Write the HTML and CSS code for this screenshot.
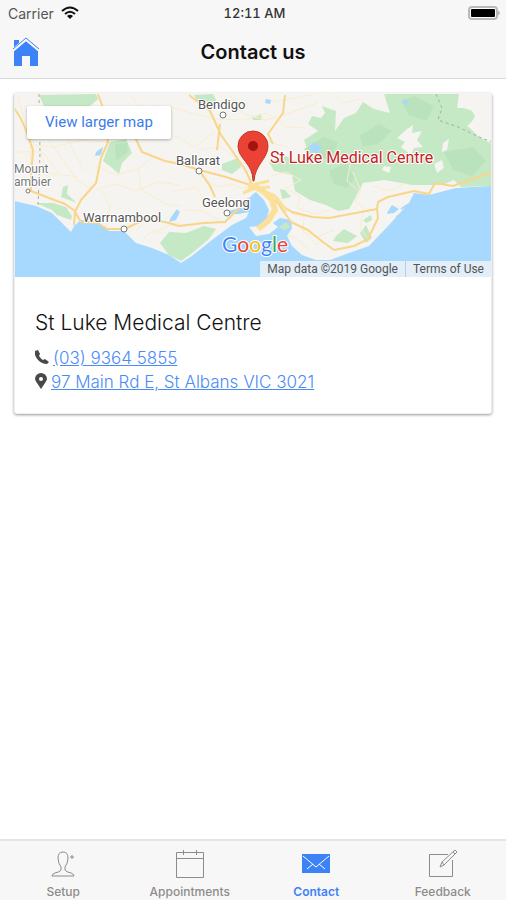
FILE: index.html
```html
<!DOCTYPE html>
<html lang="en">
<head>
  <meta charset="UTF-8">
  <meta name="viewport" content="width=device-width, initial-scale=1.0">
  <title>Contact us</title>
  <link rel="stylesheet" href="styles.css">
</head>
<body>
  <header class="header">
    <div class="status">
      <span class="carrier">Carrier
        <svg width="18" height="14" viewBox="0 0 18 14" fill="none" stroke="#111" stroke-width="2">
          <path d="M1 5Q9-2 17 5M4 8Q9 3.500 14 8"/>
          <path d="M9 13L6 10Q9 7.500 12 10Z" fill="#111" stroke="none"/>
        </svg>
      </span>
      <span class="time">12:11 AM</span>
      <svg class="battery" width="34" height="16" viewBox="0 0 34 16">
        <rect x="2" y="2" width="28" height="12" rx="3" fill="#fff" stroke="#b9b9b9" stroke-width="2"/>
        <rect x="4" y="4" width="24" height="8" rx="1" fill="#000"/>
        <path d="M31 5.500q4 2.500 0 5z" fill="#b9b9b9"/>
      </svg>
    </div>
    <div class="navbar">
      <a class="home" href="#" aria-label="Home">
        <svg width="28" height="30" viewBox="0 0 28 30" fill="#3e82f7">
          <path d="M2 3h5v4L2 11z"/>
          <path d="M14 4L26 14V29H18V19H10V29H2V14z"/>
          <path d="M1 13L14 2L27 13" fill="none" stroke="#f7f7f7" stroke-width="3"/>
          <path d="M1 12L14 1L27 12" fill="none" stroke="#3e82f7" stroke-width="1"/>
        </svg>
      </a>
      <h1 class="title">Contact us</h1>
    </div>
  </header>

  <main class="content">
    <div class="card">
      <div class="map">
        <svg class="map-picture" viewBox="0 0 478 184" preserveAspectRatio="xMidYMid slice">
          <rect width="478" height="184" fill="#f6f4f0"/>

          <!-- parks and forest -->
          <g fill="#c5e8c5">
            <path d="M25 2L82 1L84 6L76 13H30z"/>
            <path d="M96 49L112 46L118 60L108 70L105 81L97 74L89 68z"/>
            <path d="M49 94L54 92L53 101L63 110L47 104z"/>
            <path d="M22 110L39 110L52 114L58 123L57 127L43 122L38 117z"/>
            <path d="M146 150L155 139L172 140L190 133L202 136L194 147L178 160L167 168L155 162z"/>
            <path d="M180 2L199 1L203 9L185 12z"/>
            <path d="M208 71L224 65L227 74L218 81L208 77z"/>
            <path d="M238 24L247 21L248 27H239z"/>
            <path d="M255 69L272 63L285 70L296 63L290 47L304 38L294 31L298 23L307 25L311 20L308 13L322 18L321 38L330 25L342 20L349 9L360 16L376 20L370 1H445L443 15L456 15L461 23L455 34L464 43L478 51V93L447 94L440 87L428 92H398L371 87L349 90L343 102L335 116L324 118L312 112L296 107L281 98L278 82L260 78z"/>
            <path d="M266 96L271 97L277 104L268 106z"/>
            <path d="M322 143L330 136L343 143L334 150L319 148z"/>
            <path d="M349 127L357 122L358 127L352 130z"/>
            <path d="M346 140L352 132L358 145L352 150z"/>
          </g>
          <g fill="#bae2bd">
            <path d="M290 56L310 44L324 50L317 64L300 68z"/>
            <path d="M345 43L365 31L378 38L364 51L349 53z"/>
            <path d="M387 8L400 3L420 13L412 28L394 21z"/>
            <path d="M315 78L333 70L340 85L333 95L320 91z"/>
            <path d="M430 59L459 54L472 68L458 83L439 77z"/>
            <path d="M101 51L114 50L113 60L102 68z"/>
          </g>
          <g fill="#f6f4f0">
            <path d="M383 45L393 36L399 32L398 40L408 38L403 47L409 54L400 55L397 62L387 54L391 49z"/>
            <path d="M429 50L435 46L433 57L428 59zM420 71L428 67L430 75L423 80zM370 73L377 74L375 80L368 77z"/>
            <path d="M446 0H478V47L464 41L453 33L462 25L459 18L446 14z"/>
            <path d="M348 0H368L371 19L362 12L355 6L339 8L331 19L323 11L316 17V0z"/>
            <path d="M343 101L355 95L376 92L398 92L410 96L398 102L375 108L362 116L340 117z"/>
          </g>

          <!-- minor roads -->
          <g fill="none" stroke="#f8edcd" stroke-width="1">
            <path d="M4 3L10 25L20 52L40 54L68 47L96 49M30 20L36 48L50 69L62 86L78 96M50 17Q46 34 57 53T69 78M80 72L102 82L124 76L138 64L166 72M103 20L112 36L132 39L151 45M124 76L127 96L151 111L166 113M81 97L101 91L122 98L144 89L166 92M92 135L96 113L88 97M27 60L33 80L64 84M17 44L16 74L37 85"/>
            <path d="M155 13L176 20L201 26L230 27L253 20L273 34L292 35M201 39L180 54L164 44L145 40M185 57L207 54L229 70L252 75M187 83L203 94L219 91L234 97M160 98L183 94L191 111L211 118M207 128L189 118L169 117M216 2L229 21L252 27L276 20L303 10M257 9L281 5L300 1M241 97L231 77L240 60L256 49L273 54"/>
            <path d="M258 83L272 79L287 87L272 95L286 104L283 115L301 121L316 117M277 120L290 124L289 139L303 144L320 137M339 79L347 98L341 108L350 115L346 134L356 149M359 93L375 98L392 90M338 62L333 88L347 100"/>
            <path d="M130 145L139 137L150 141M174 132L158 130L139 141M122 138L133 127L148 129"/>
            <path d="M84 43L96 29L117 23L140 12M0 59L28 59L45 80M0 88L21 88M117 3L129 19L141 21M320 0L330 10L346 6M267 140L282 145L296 157M285 133L302 151L311 149"/>
          </g>

          <!-- sea, bays and lakes -->
          <g fill="#a7d8fd">
            <path d="M0 108L22 113L38 120L48 130L57 139L60 133L67 127L85 130L95 138L110 138L122 150L138 155L155 162L167 170L178 163L198 147L218 132L232 125L235 119L225 121L214 121L214 118L227 115L237 103L242 99L250 107L255 117L253 125L245 133L235 134L242 143L255 141L264 134L259 130L266 125L277 127L278 135L273 143L278 153L288 162L302 167L316 167L335 160L355 153L375 132L395 110L400 100L415 102L442 95L478 93V184H0z"/>
            <path d="M157 124L163 116L166 119L162 127L155 129zM82 59L89 54L87 62L81 63zM296 54L300 49L308 55L303 60L295 57zM374 118L378 112L385 116L380 120L373 121zM252 6L257 7L256 11L251 10zM389 7L395 8L393 12L388 10z"/>
          </g>
          <path d="M265 134L272 129L277 134L270 137z" fill="#c5e8c5"/>
          <path d="M387 116L398 109L392 118L382 124" fill="none" stroke="#a7d8fd" stroke-width="2"/>

          <!-- main roads -->
          <g fill="none" stroke="#f9d58a" stroke-width="2" stroke-linejoin="round">
            <path d="M0 15Q9 27 14 43L19 57L17 84L17 98L35 105L51 111L61 118L60 132M84 1L89 15L94 49L87 65L82 90L67 107L61 119L67 129L84 130L93 136L111 136L129 127L151 129L165 133L190 130L211 129L235 105"/>
            <path d="M119 40L128 59L151 68L166 71L185 77L212 84L239 93M175 2L196 18L207 42L219 59L232 78L239 94M206 31L203 57M185 77L196 93L201 104M271 2L269 20L254 41L259 51M239 94L251 99L265 111L278 119L298 124L315 125L331 122L363 116L364 109L374 104L400 98L415 101L421 90L439 93L478 79"/>
            <path d="M265 112L277 129L294 137L309 149L320 157L340 153L354 146L364 125L363 115"/>
          </g>
          <g fill="none" stroke="#fbe09a" stroke-linejoin="round">
            <path d="M234 92L241 94L249 98L258 107L261 117L254 128L244 136" stroke-width="6"/>
            <path d="M247 97L261 103L273 118M241 91L255 88M243 95L256 94M229 100L241 95" stroke-width="3"/>
          </g>

          <!-- state border -->
          <path d="M25 1L26 60L24 115M422 1L428 15L424 27L444 34L465 44L478 49" fill="none" stroke="#a9aca8" stroke-width="1" stroke-dasharray="3 3"/>

          <g class="towns">
            <g fill="#fff" stroke="#777" stroke-width="1">
              <circle cx="14" cy="98" r="2"/>
              <circle cx="110" cy="136" r="3"/>
              <circle cx="209" cy="22" r="3"/>
              <circle cx="185" cy="78" r="3"/>
              <circle cx="213" cy="120" r="3"/>
            </g>
            <text x="0" y="80">Mount</text>
            <text x="0" y="93">ambier</text>
            <text class="town" x="69" y="129">Warrnambool</text>
            <text class="town" x="184" y="16">Bendigo</text>
            <text class="town" x="162" y="72">Ballarat</text>
            <text class="town" x="188" y="114">Geelong</text>
          </g>

          <path d="M239 88C239 70 224 66 224 53A15 15 0 0 1 254 53C254 66 241 71 240 88z" fill="#ea4335" stroke="#c5362c" stroke-width="1"/>
          <circle cx="239" cy="53" r="5" fill="#a01412"/>
          <text class="place" x="256" y="70">St Luke Medical Centre</text>
          <text class="google" x="208" y="159"><tspan fill="#4285f4">G</tspan><tspan fill="#ea4335">o</tspan><tspan fill="#fbbc05">o</tspan><tspan fill="#4285f4">g</tspan><tspan fill="#34a853">l</tspan><tspan fill="#ea4335">e</tspan></text>
        </svg>
        <a class="larger" href="#">View larger map</a>
        <div class="credits">
          <span>Map data ©2019 Google</span>
          <a href="#">Terms of Use</a>
        </div>
      </div>

      <div class="details">
        <h2 class="name">St Luke Medical Centre</h2>
        <p class="line">
          <svg width="14" height="18" viewBox="0 0 14 18" fill="#484848">
            <path d="M0 2L3 1L5 5L4 7Q6 10 8 11L10 10L14 13L12 15Q7 15 3 11T0 2z"/>
          </svg>
          <a href="tel:0393645855">(03) 9364 5855</a>
        </p>
        <p class="line">
          <svg width="12" height="18" viewBox="0 0 12 18">
            <path d="M6 16L2 10Q0 7 0 6A6 6 0 0 1 12 6Q12 7 10 10z" fill="#484848"/>
            <circle cx="6" cy="6" r="2" fill="#fff"/>
          </svg>
          <a href="#">97 Main Rd E, St Albans VIC 3021</a>
        </p>
      </div>
    </div>
  </main>

  <nav class="tabs">
    <a class="tab" href="#">
      <svg width="30" height="30" viewBox="0 0 30 30" fill="none" stroke="#8c8c8c" stroke-width="1">
        <path d="M13 18Q10 14 10 9Q10 3 15 3T20 9Q20 14 17 18V21Q18 23 23 24Q26 25 26 27H4Q4 25 7 24Q12 23 13 21z"/>
        <path d="M24 6v4M22 8h4"/>
      </svg>
      Setup
    </a>
    <a class="tab" href="#">
      <svg width="30" height="30" viewBox="0 0 30 30" fill="none" stroke="#8c8c8c" stroke-width="1">
        <path d="M1.500 3.500h27v25h-27zM1.500 9.500h27M8.500 1v5M21.500 1v5"/>
      </svg>
      Appointments
    </a>
    <a class="tab active" href="#">
      <svg width="30" height="30" viewBox="0 0 30 30">
        <rect x="1" y="5" width="28" height="19" fill="#3e82f7"/>
        <path d="M2 7L15 18L28 7M6 20L12 15M24 20L18 15" fill="none" stroke="#fff" stroke-width="1"/>
      </svg>
      Contact
    </a>
    <a class="tab" href="#">
      <svg width="30" height="30" viewBox="0 0 30 30" fill="none" stroke="#8c8c8c" stroke-width="1">
        <path d="M20 5.500H1.500v22h23V11"/>
        <path d="M12 18L14 13L27 1L29 3L16 16zM14 13L16 16M25 3L27 5"/>
      </svg>
      Feedback
    </a>
  </nav>
</body>
</html>
```
FILE: styles.css
```css
* {
  box-sizing: border-box;
}
body {
  margin: 0;
  min-height: 100vh;
  display: flex;
  flex-direction: column;
  background-color: #fff;
  font-family: Inter, "Liberation Sans", sans-serif;
  color: #111;
}
.header {
  background-color: #f7f7f7;
  border-bottom: 1px solid #d9d9d9;
}
.status {
  display: grid;
  grid-template-columns: 1fr auto 1fr;
  align-items: center;
  height: 26px;
  padding: 0 5px 0 8px;
  font-size: 14px;
}
.carrier {
  display: flex;
  align-items: center;
  gap: 7px;
  color: #555;
}
.time {
  font-size: 13px;
  font-weight: 500;
  font-variant-numeric: tabular-nums;
  color: #333;
}
.battery {
  justify-self: end;
}
.navbar {
  display: grid;
  grid-template-columns: 1fr auto 1fr;
  align-items: center;
  height: 52px;
  padding: 0 12px;
}
.home {
  display: flex;
}
.title {
  margin: 0;
  font-size: 20px;
  font-weight: 600;
}
.content {
  flex: 1;
  padding: 14px;
}
.card {
  overflow: hidden;
  border-radius: 3px;
  background-color: #fff;
  border: 1px solid #eee;
  border-top: 0;
  box-shadow: 0 1px 3px rgba(0, 0, 0, 0.4);
}
.map {
  position: relative;
  font-family: Roboto, sans-serif;
}
.map-picture {
  display: block;
  width: 100%;
  height: 184px;
}
.map-picture text {
  paint-order: stroke;
  stroke: #fff;
  stroke-width: 2px;
}
.towns text {
  font-size: 12px;
  fill: #777;
}
.towns .town {
  font-size: 13px;
  fill: #555;
}
.place {
  font-size: 16px;
  fill: #c5221f;
}
.google {
  font-family: Lato, sans-serif;
  font-size: 21px;
  font-weight: 400;
}
.larger {
  position: absolute;
  top: 13px;
  left: 12px;
  padding: 0 18px;
  line-height: 33px;
  font-size: 15px;
  color: #3c7bea;
  text-decoration: none;
  background-color: #fff;
  border-radius: 2px;
  box-shadow: 0 1px 3px rgba(0, 0, 0, 0.3);
}
.credits {
  position: absolute;
  right: 0;
  bottom: 0;
  display: flex;
  line-height: 16px;
  font-size: 12px;
  color: #555;
  background-color: rgba(245, 245, 245, 0.75);
}
.credits span, .credits a {
  padding: 0 7px;
  color: #555;
  text-decoration: none;
}
.credits a {
  border-left: 1px solid #b9cfdf;
}
.details {
  padding: 32px 20px 19px;
}
.name {
  margin: 0 0 9px;
  font-size: 21px;
  line-height: 28px;
  font-weight: 300;
}
.line {
  display: flex;
  align-items: center;
  gap: 4px;
  margin: 0;
  font-size: 17px;
  line-height: 24px;
}
.line a {
  color: #4b8bf5;
  font-weight: 300;
}
.tabs {
  display: grid;
  grid-template-columns: repeat(4, 1fr);
  background-color: #f7f7f7;
  border-top: 2px solid #e4e4e4;
}
.tab {
  display: flex;
  flex-direction: column;
  align-items: center;
  gap: 5px;
  padding: 8px 0 0;
  font-size: 12px;
  line-height: 16px;
  font-weight: 500;
  color: #8c8c8c;
  text-decoration: none;
}
.active {
  color: #3e82f7;
  font-weight: 600;
}
```
